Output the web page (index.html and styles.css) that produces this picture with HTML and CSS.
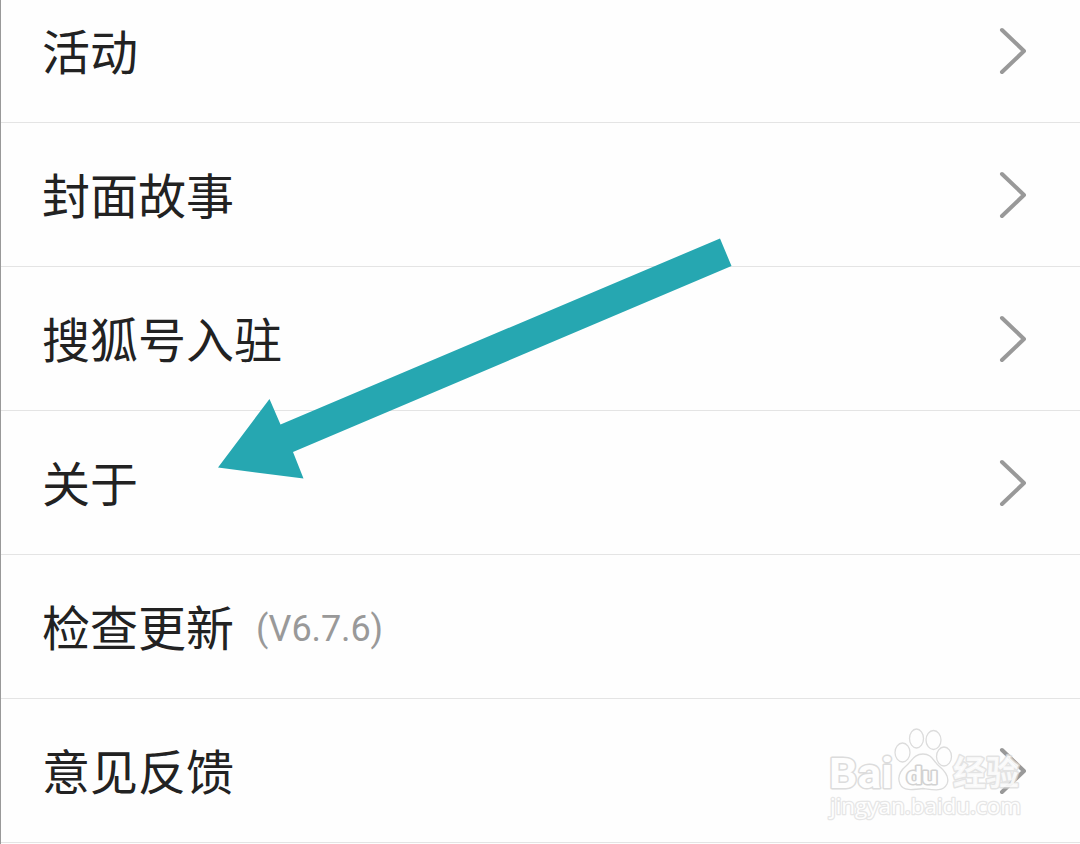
FILE: index.html
```html
<!DOCTYPE html>
<html lang="zh-CN">
<head>
    <meta charset="UTF-8">
    <meta name="viewport" content="width=device-width, initial-scale=1.0">
    <title>设置</title>
    <link rel="stylesheet" href="styles.css">
</head>
<body>
    <div class="settings">
        <ul class="settings-list">
            <li class="item">
                <span class="label">活动</span>
                <svg class="chevron" viewBox="0 0 28 48"><path d="M3 3L25 24L3 45"/></svg>
            </li>
            <li class="item">
                <span class="label">封面故事</span>
                <svg class="chevron" viewBox="0 0 28 48"><path d="M3 3L25 24L3 45"/></svg>
            </li>
            <li class="item">
                <span class="label">搜狐号入驻</span>
                <svg class="chevron" viewBox="0 0 28 48"><path d="M3 3L25 24L3 45"/></svg>
            </li>
            <li class="item">
                <span class="label">关于</span>
                <svg class="chevron" viewBox="0 0 28 48"><path d="M3 3L25 24L3 45"/></svg>
            </li>
            <li class="item">
                <span class="label">检查更新</span>
                <span class="version">(V6.7.6)</span>
            </li>
            <li class="item">
                <span class="label">意见反馈</span>
                <svg class="chevron" viewBox="0 0 28 48"><path d="M3 3L25 24L3 45"/></svg>
            </li>
        </ul>

        <!-- Flecha que señala "关于" -->
        <svg class="arrow" viewBox="0 0 514 241">
            <polygon points="0,229.500 51.500,161 62.500,186.500 502,0.500 513.500,28 75,214 85.500,240.500"/>
        </svg>

        <!-- Marca de agua -->
        <svg class="watermark" viewBox="0 0 220 124">
            <g class="paw">
                <ellipse cx="82.500" cy="32.500" rx="7.500" ry="9.500"/>
                <ellipse cx="96.500" cy="18.500" rx="7" ry="9.500"/>
                <ellipse cx="113.500" cy="20" rx="7.500" ry="9.500"/>
                <ellipse cx="124" cy="36.500" rx="7.500" ry="9.500"/>
                <path d="M103 34C94 34 92 41 86 46C80 51 77 57 80 64C83 71 92 70 103 68.500C114 70 123 72 127 64C130 57 125 51 119 46C113 41 112 34 103 34Z"/>
            </g>
            <text class="brand" x="9" y="68" textLength="64" lengthAdjust="spacingAndGlyphs">Bai</text>
            <text class="brand-du" x="86.500" y="64" textLength="31" lengthAdjust="spacingAndGlyphs">du</text>
            <text class="brand-cn" x="133" y="65" textLength="66" lengthAdjust="spacingAndGlyphs">经验</text>
            <text class="url" x="10" y="94" textLength="191" lengthAdjust="spacingAndGlyphs">jingyan.baidu.com</text>
        </svg>
    </div>
</body>
</html>
```
FILE: styles.css
```css
body {
    margin: 0;
    background-color: #fefefe;
    font-family: Roboto, "Noto Sans CJK SC", sans-serif;
    overflow: hidden;
}
.settings {
    position: relative;
    height: 844px;
    box-sizing: border-box;
    border-left: 1px solid #999;
    overflow: hidden;
}
.settings-list {
    list-style: none;
    margin: -21px 0 0;
    padding: 0;
}
.item {
    display: flex;
    align-items: center;
    height: 144px;
    padding: 0 53px 0 41px;
    box-sizing: border-box;
    border-bottom: 1px solid #e4e4e4;
}
.label {
    padding-top: 6px;
    font-size: 48px;
    line-height: 72px;
    color: #222;
}
.version {
    margin-left: 22px;
    padding-top: 5px;
    font-size: 36px;
    letter-spacing: -0.1px;
    color: #999;
}
.chevron {
    width: 28px;
    height: 48px;
    margin-left: auto;
    fill: none;
    stroke: #999;
    stroke-width: 4;
    stroke-linecap: round;
    stroke-linejoin: round;
}
.arrow {
    position: absolute;
    left: 217px;
    top: 238px;
    width: 514px;
    height: 241px;
    fill: #26a7b1;
}
.watermark {
    position: absolute;
    left: 819px;
    top: 720px;
    width: 220px;
    height: 124px;
    fill: #fefefe;
    stroke: #dcdcdc;
    stroke-width: 3;
    stroke-linejoin: round;
    paint-order: stroke;
}
.paw {
    fill: none;
    stroke-width: 1.3;
}
.brand,
.brand-du {
    font-family: Roboto, sans-serif;
    font-weight: 700;
}
.brand {
    font-size: 43px;
}
.brand-du {
    font-size: 23px;
    stroke: #d2d2d2;
}
.brand-cn {
    font-family: "Noto Sans CJK SC", sans-serif;
    font-size: 34px;
    font-weight: 700;
    fill-opacity: 0.85;
    stroke-opacity: 0.8;
}
.url {
    font-family: "Open Sans", "Noto Sans", sans-serif;
    font-size: 22px;
    stroke: #e6e6e6;
    stroke-width: 2.5;
}
```
